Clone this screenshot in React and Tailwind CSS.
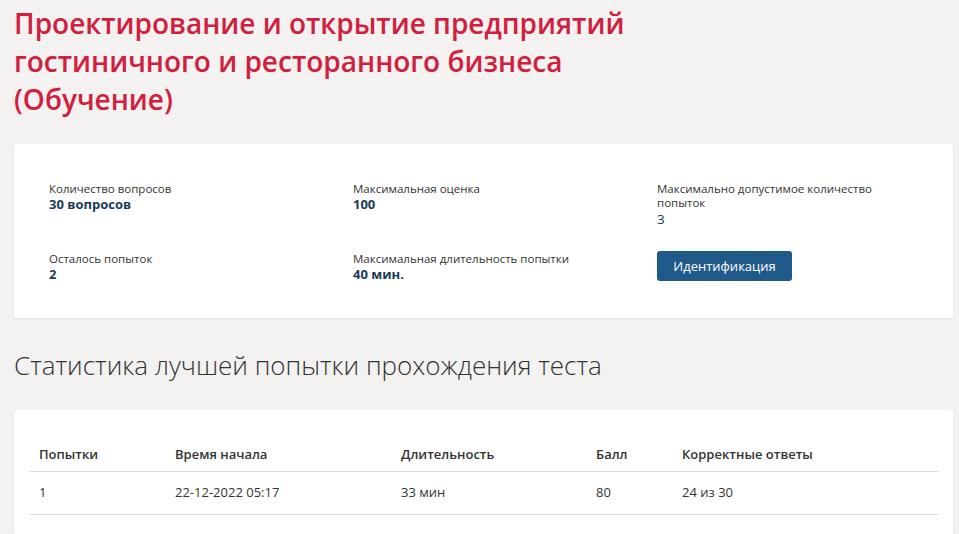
export default function App() {
  const font = { fontFamily: '"Open Sans", "Noto Sans", sans-serif' };
  return (
    <div className="min-h-[534px] w-full bg-[#f3f2f0] pl-[14px] pr-[6px] pt-[4px] pb-6" style={font}>
      <h1 className="text-[28px] leading-[38px] font-semibold font-stretch-[92%] text-[#d1203f]">
        Проектирование и открытие предприятий
        <br />
        гостиничного и ресторанного бизнеса
        <br />
        (Обучение)
      </h1>

      <div className="mt-[26px] h-[174px] rounded-[3px] bg-white shadow-[0_1px_2px_rgba(0,0,0,0.08)] px-[35px] pt-[38px]">
        <div className="grid grid-cols-[304px_304px_1fr] gap-y-[24px] text-[11.5px] leading-[14px] text-[#333]">
          <div>
            <div>Количество вопросов</div>
            <div className="text-[13px] leading-[16px] font-bold text-[#1b3a5a]">30 вопросов</div>
          </div>
          <div>
            <div>Максимальная оценка</div>
            <div className="text-[13px] leading-[16px] font-bold text-[#1b3a5a]">100</div>
          </div>
          <div>
            <div className="w-[240px]">Максимально допустимое количество попыток</div>
            <div className="mt-[1px] text-[13.5px] leading-[16px] text-[#1b3a5a]">3</div>
          </div>
          <div className="pt-[1px]">
            <div>Осталось попыток</div>
            <div className="text-[13px] leading-[16px] font-bold text-[#1b3a5a]">2</div>
          </div>
          <div className="pt-[1px]">
            <div>Максимальная длительность попытки</div>
            <div className="text-[13px] leading-[16px] font-bold text-[#1b3a5a]">40 мин.</div>
          </div>
          <div>
            <button className="h-[30px] w-[135px] rounded-[3px] bg-[#1f5a8b] text-[13px] text-white">
              Идентификация
            </button>
          </div>
        </div>
      </div>

      <h2 className="mt-[31px] text-[26px] leading-[32px] font-light text-[#333]">
        Статистика лучшей попытки прохождения теста
      </h2>

      <div className="mt-[29px] rounded-[3px] bg-white shadow-[0_1px_2px_rgba(0,0,0,0.08)] pl-[15px] pr-[14px] pt-[28px] pb-[20px]">
        <table className="w-full text-[13px] text-[#333]" style={{ borderCollapse: 'collapse' }}>
          <thead>
            <tr className="border-b border-[#dddddd]">
              <th className="h-[33px] w-[146px] pl-[10px] text-left font-semibold">Попытки</th>
              <th className="w-[226px] text-left font-semibold">Время начала</th>
              <th className="w-[195px] text-left font-semibold">Длительность</th>
              <th className="w-[86px] text-left font-semibold">Балл</th>
              <th className="text-left font-semibold">Корректные ответы</th>
            </tr>
          </thead>
          <tbody>
            <tr className="border-b border-[#dddddd]">
              <td className="h-[43px] pl-[10px]">1</td>
              <td>22-12-2022 05:17</td>
              <td>33 мин</td>
              <td>80</td>
              <td>24 из 30</td>
            </tr>
          </tbody>
        </table>
      </div>
    </div>
  );
}
